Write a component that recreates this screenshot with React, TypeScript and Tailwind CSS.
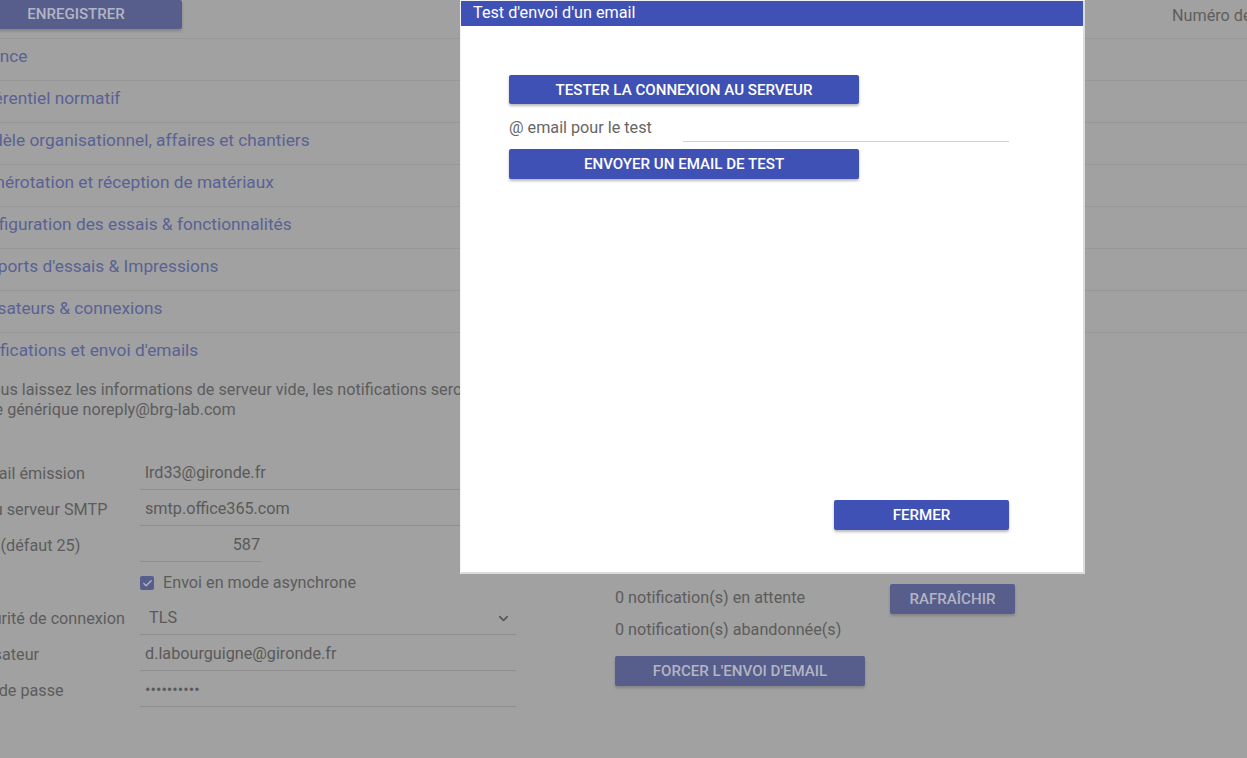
import React from "react";
import { ChevronDown, Check } from "lucide-react";

const sections = [
  "Licence",
  "Référentiel normatif",
  "Modèle organisationnel, affaires et chantiers",
  "Numérotation et réception de matériaux",
  "Configuration des essais & fonctionnalités",
  "Rapports d'essais & Impressions",
  "Utilisateurs & connexions",
];

function Field({ label, value, narrow, right }: { label: string; value: string; narrow?: boolean; right?: boolean }) {
  return (
    <div className="flex h-8 items-stretch">
      <div className="w-[174px] shrink-0 flex items-center text-[16.2px] text-[#5c5c5c] whitespace-nowrap">{label}</div>
      <div
        className={`${narrow ? "w-[122px]" : "w-[376px]"} flex items-center border-b border-[#8e8e8e] text-[16.2px] text-[#5a5a5a] ${right ? "justify-end pr-[2px]" : "pl-[5px]"}`}
      >
        {value}
      </div>
    </div>
  );
}

export default function App() {
  const btn =
    "flex items-center justify-center rounded-[2px] bg-[#3f51b5] text-white text-[15.1px] font-medium uppercase shadow-[0_2px_3px_rgba(0,0,0,0.28)]";
  const dimBtn =
    "flex items-center justify-center rounded-[2px] bg-[#575e8b] text-[#b3b5c4] text-[15.1px] font-medium uppercase shadow-[0_2px_3px_rgba(0,0,0,0.18)]";
  return (
    <div className="relative w-[1247px] h-[758px] overflow-hidden bg-[#a1a1a1] font-['Roboto',sans-serif]">
      {/* Page (dimmed behind the dialog) */}
      <div className="w-[1400px] ml-[-54px]">
        <div className="flex h-[39px] border-b border-[#979797]">
          <div className="ml-[24px] w-[212px] h-[29px] flex">
            <div className={`${dimBtn} w-full h-full`}>Enregistrer</div>
          </div>
          <div className="ml-[990px] pt-[4px] text-[16.2px] text-[#5e5e5e] whitespace-nowrap">Numéro de série</div>
        </div>
        {sections.map((s) => (
          <div key={s} className="flex h-[42px] items-center border-b border-[#979797] pl-[22px] pb-[5px] text-[17.3px] text-[#5a6194] whitespace-nowrap">
            {s}
          </div>
        ))}
        <div className="flex h-[41px] items-center pl-[22px] pb-[5px] text-[17.3px] text-[#5a6194] whitespace-nowrap">
          Notifications et envoi d'emails
        </div>
        <div className="pl-[20px] pt-[6px] text-[16.2px] leading-[20px] text-[#5c5c5c] whitespace-nowrap">
          <div>Si vous laissez les informations de serveur vide, les notifications seront envoyées depuis l'</div>
          <div className="ml-[-20px]">adresse générique noreply@brg-lab.com</div>
        </div>
        <div className="flex pl-[20px] pt-[38px]">
          <div className="flex flex-col gap-1">
            <Field label="@ mail émission" value="lrd33@gironde.fr" />
            <Field label="IP du serveur SMTP" value="smtp.office365.com" />
            <Field label="Port (défaut 25)" value="587" narrow right />
            <div className="flex h-[33px] items-center pt-[1px]">
              <div className="w-[174px] shrink-0" />
              <div className="w-[14px] h-[14px] rounded-[2px] bg-[#575e8b] flex items-center justify-center">
                <Check className="w-[11px] h-[11px] text-[#b3b5c4]" strokeWidth={3} />
              </div>
              <span className="ml-[9px] text-[16.2px] text-[#5c5c5c]">Envoi en mode asynchrone</span>
            </div>
            <div className="flex h-8 items-stretch">
              <div className="w-[174px] shrink-0 flex items-center text-[16.2px] text-[#5c5c5c] whitespace-nowrap">Sécurité de connexion</div>
              <div className="w-[376px] flex items-center justify-between border-b border-[#8e8e8e] pl-[9px] pr-[5px] text-[16.2px] text-[#5a5a5a]">
                <span>TLS</span>
                <ChevronDown className="w-[15px] h-[15px] text-[#555]" strokeWidth={2.5} />
              </div>
            </div>
            <Field label="Utilisateur" value="d.labourguigne@gironde.fr" />
            <Field label="Mot de passe" value="••••••••••" />
          </div>
          <div className="ml-[99px] pt-[126px] w-[400px] text-[16.2px] text-[#5c5c5c]">
            <div className="flex h-[30px] items-center justify-between">
              <span className="pb-[2px]">0 notification(s) en attente</span>
              <div className={`${dimBtn} w-[125px] h-[30px]`}>Rafraîchir</div>
            </div>
            <div className="flex h-[30px] items-center pt-[3px]">0 notification(s) abandonnée(s)</div>
            <div className={`${dimBtn} mt-[12px] w-[250px] h-[30px]`}>Forcer l'envoi d'email</div>
          </div>
        </div>
      </div>

      {/* Dialog */}
      <div className="absolute left-[460px] top-0 w-[625px] h-[574px] flex flex-col bg-white border-l border-t border-[#f2f2f2] border-r-2 border-b-2 border-r-[#dcdcdc] border-b-[#dcdcdc]">
        <div className="h-[25px] bg-[#3f51b5] flex items-center pl-[12px] text-[16.2px] text-white">Test d'envoi d'un email</div>
        <div className="flex flex-col flex-1 pl-[48px] pt-[49px] pb-[42px]">
          <div className={`${btn} w-[350px] h-[29px] pt-[1px]`}>Tester la connexion au serveur</div>
          <div className="flex h-[38px] items-stretch w-[500px]">
            <div className="w-[174px] flex items-end pb-[2px] text-[16.2px] text-[#666] whitespace-nowrap">@ email pour le test</div>
            <div className="flex-1 border-b border-[#d0d0d0]" />
          </div>
          <div className={`${btn} mt-[7px] w-[350px] h-[30px]`}>Envoyer un email de test</div>
          <div className="mt-auto w-[500px] flex justify-end">
            <div className={`${btn} w-[175px] h-[30px]`}>Fermer</div>
          </div>
        </div>
      </div>
    </div>
  );
}
